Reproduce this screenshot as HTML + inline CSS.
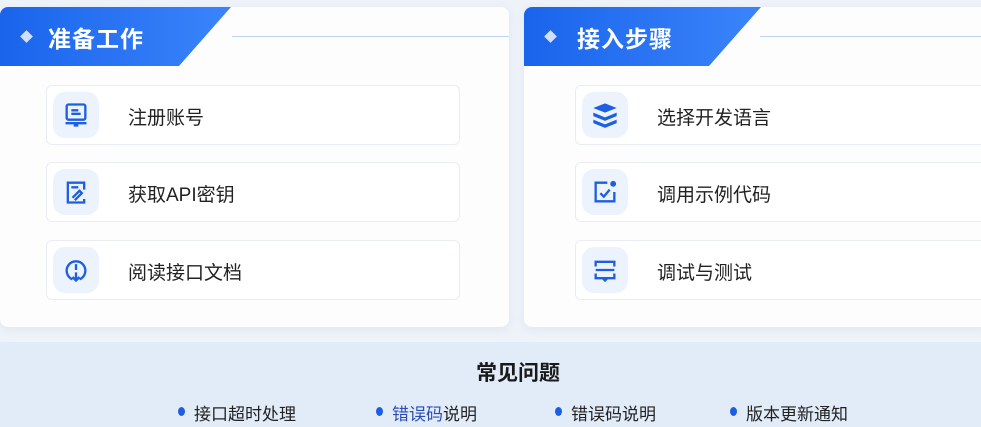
<!DOCTYPE html>
<html><head><meta charset="utf-8"><style>
*{margin:0;padding:0;box-sizing:border-box}
body{width:981px;height:427px;overflow:hidden;background:#eef2f9;font-family:"Liberation Sans","Noto Sans CJK SC",sans-serif;position:relative}
.card{position:absolute;top:7px;height:320px;background:#fdfdfe;border-radius:8px;overflow:hidden;box-shadow:0 2px 8px rgba(180,195,225,.25)}
.tab{position:absolute;left:0;top:0;height:59px;background:linear-gradient(90deg,#1a64ec,#3a84fb);clip-path:polygon(0 0,100% 0,calc(100% - 52px) 100%,0 100%);border-bottom-right-radius:10px}
.tab .d{position:absolute;left:22px;top:25px;width:9px;height:9px;background:#cfe0ff;transform:rotate(45deg)}
.tab .t{position:absolute;left:48px;top:13px;color:#fff;font-size:23px;font-weight:bold;letter-spacing:1px}
.line{position:absolute;top:29px;height:1px;background:#bcd4f6}
.item{position:absolute;height:60px;border:1px solid #e9edf3;border-radius:6px;background:#fff}
.ic{position:absolute;left:6px;top:6px;width:46px;height:46px;border-radius:12px;background:#edf3fd}
.ic svg{position:absolute;left:9px;top:9px}
.item .tx{position:absolute;left:81px;top:17px;font-size:19px;color:#222}
.bot{position:absolute;left:0;top:342px;width:981px;height:85px;background:#e2ebf8}
.h{position:absolute;top:357px;left:0;width:1036px;text-align:center;font-size:21px;font-weight:bold;color:#1a1a1a}
.l{position:absolute;top:400px;font-size:17px;color:#222}
.l:before{content:"";position:absolute;left:-16px;top:7px;width:7px;height:9px;border-radius:50%;background:#1c5fe6}
</style></head><body>
<div class="card" style="left:0;width:509px">
<div class="tab" style="width:231px"><div class="d"></div><div class="t">准备工作</div></div>
<div class="line" style="left:232px;width:277px"></div>
<div class="item" style="left:46px;top:78px;width:414px"><div class="ic"><svg width="28" height="28" viewBox="0 0 24 24" fill="none" stroke="#1d5fe0" stroke-width="2"><rect x="4" y="3" width="16" height="13" rx="1.5"/><path d="M8 8h6M8 11h8M3 19h18M11 19v2h2v-2"/></svg></div><div class="tx">注册账号</div></div>
<div class="item" style="left:46px;top:155px;width:414px"><div class="ic"><svg width="28" height="28" viewBox="0 0 24 24" fill="none" stroke="#1d5fe0" stroke-width="2"><path d="M19 10V4H5v17h14v-3M8 8h6M9 17l6-6 2 2-6 6"/></svg></div><div class="tx">获取API密钥</div></div>
<div class="item" style="left:46px;top:233px;width:414px"><div class="ic"><svg width="28" height="28" viewBox="0 0 24 24" fill="none" stroke="#1d5fe0" stroke-width="2"><path d="M9 20a8 8 0 1 1 6 0M12 7v5M12 14v7M9 18l3 3 3-3"/></svg></div><div class="tx">阅读接口文档</div></div>
</div>
<div class="card" style="left:524px;width:470px">
<div class="tab" style="width:237px"><div class="d"></div><div class="t" style="left:53px">接入步骤</div></div>
<div class="line" style="left:236px;width:240px"></div>
<div class="item" style="left:51px;top:78px;width:420px"><div class="ic"><svg width="28" height="28" viewBox="0 0 24 24" fill="#1d5fe0"><path d="M12 2l10 4-10 4L2 6z"/><path d="M2 10l10 4 10-4v3l-10 4-10-4z"/><path d="M2 16l10 4 10-4v3l-10 4-10-4z"/></svg></div><div class="tx">选择开发语言</div></div>
<div class="item" style="left:51px;top:155px;width:420px"><div class="ic"><svg width="28" height="28" viewBox="0 0 24 24" fill="none" stroke="#1d5fe0" stroke-width="2"><path d="M14 4H4v16h16v-8M8 13l3 3 5-6"/><circle cx="19" cy="5" r="1.5" fill="#1d5fe0"/></svg></div><div class="tx">调用示例代码</div></div>
<div class="item" style="left:51px;top:233px;width:420px"><div class="ic"><svg width="28" height="28" viewBox="0 0 24 24" fill="none" stroke="#1d5fe0" stroke-width="2"><path d="M4 9V5h16v4M4 15v4h16v-4M4 12h16M10 19l2 2 2-2"/></svg></div><div class="tx">调试与测试</div></div>
</div>
<div class="bot"></div>
<div class="h">常见问题</div>
<div class="l" style="left:194px">接口超时处理</div>
<div class="l" style="left:392px"><span style="color:#2a4cb8">错误码</span>说明</div>
<div class="l" style="left:571px">错误码说明</div>
<div class="l" style="left:746px">版本更新通知</div>
</body></html>
